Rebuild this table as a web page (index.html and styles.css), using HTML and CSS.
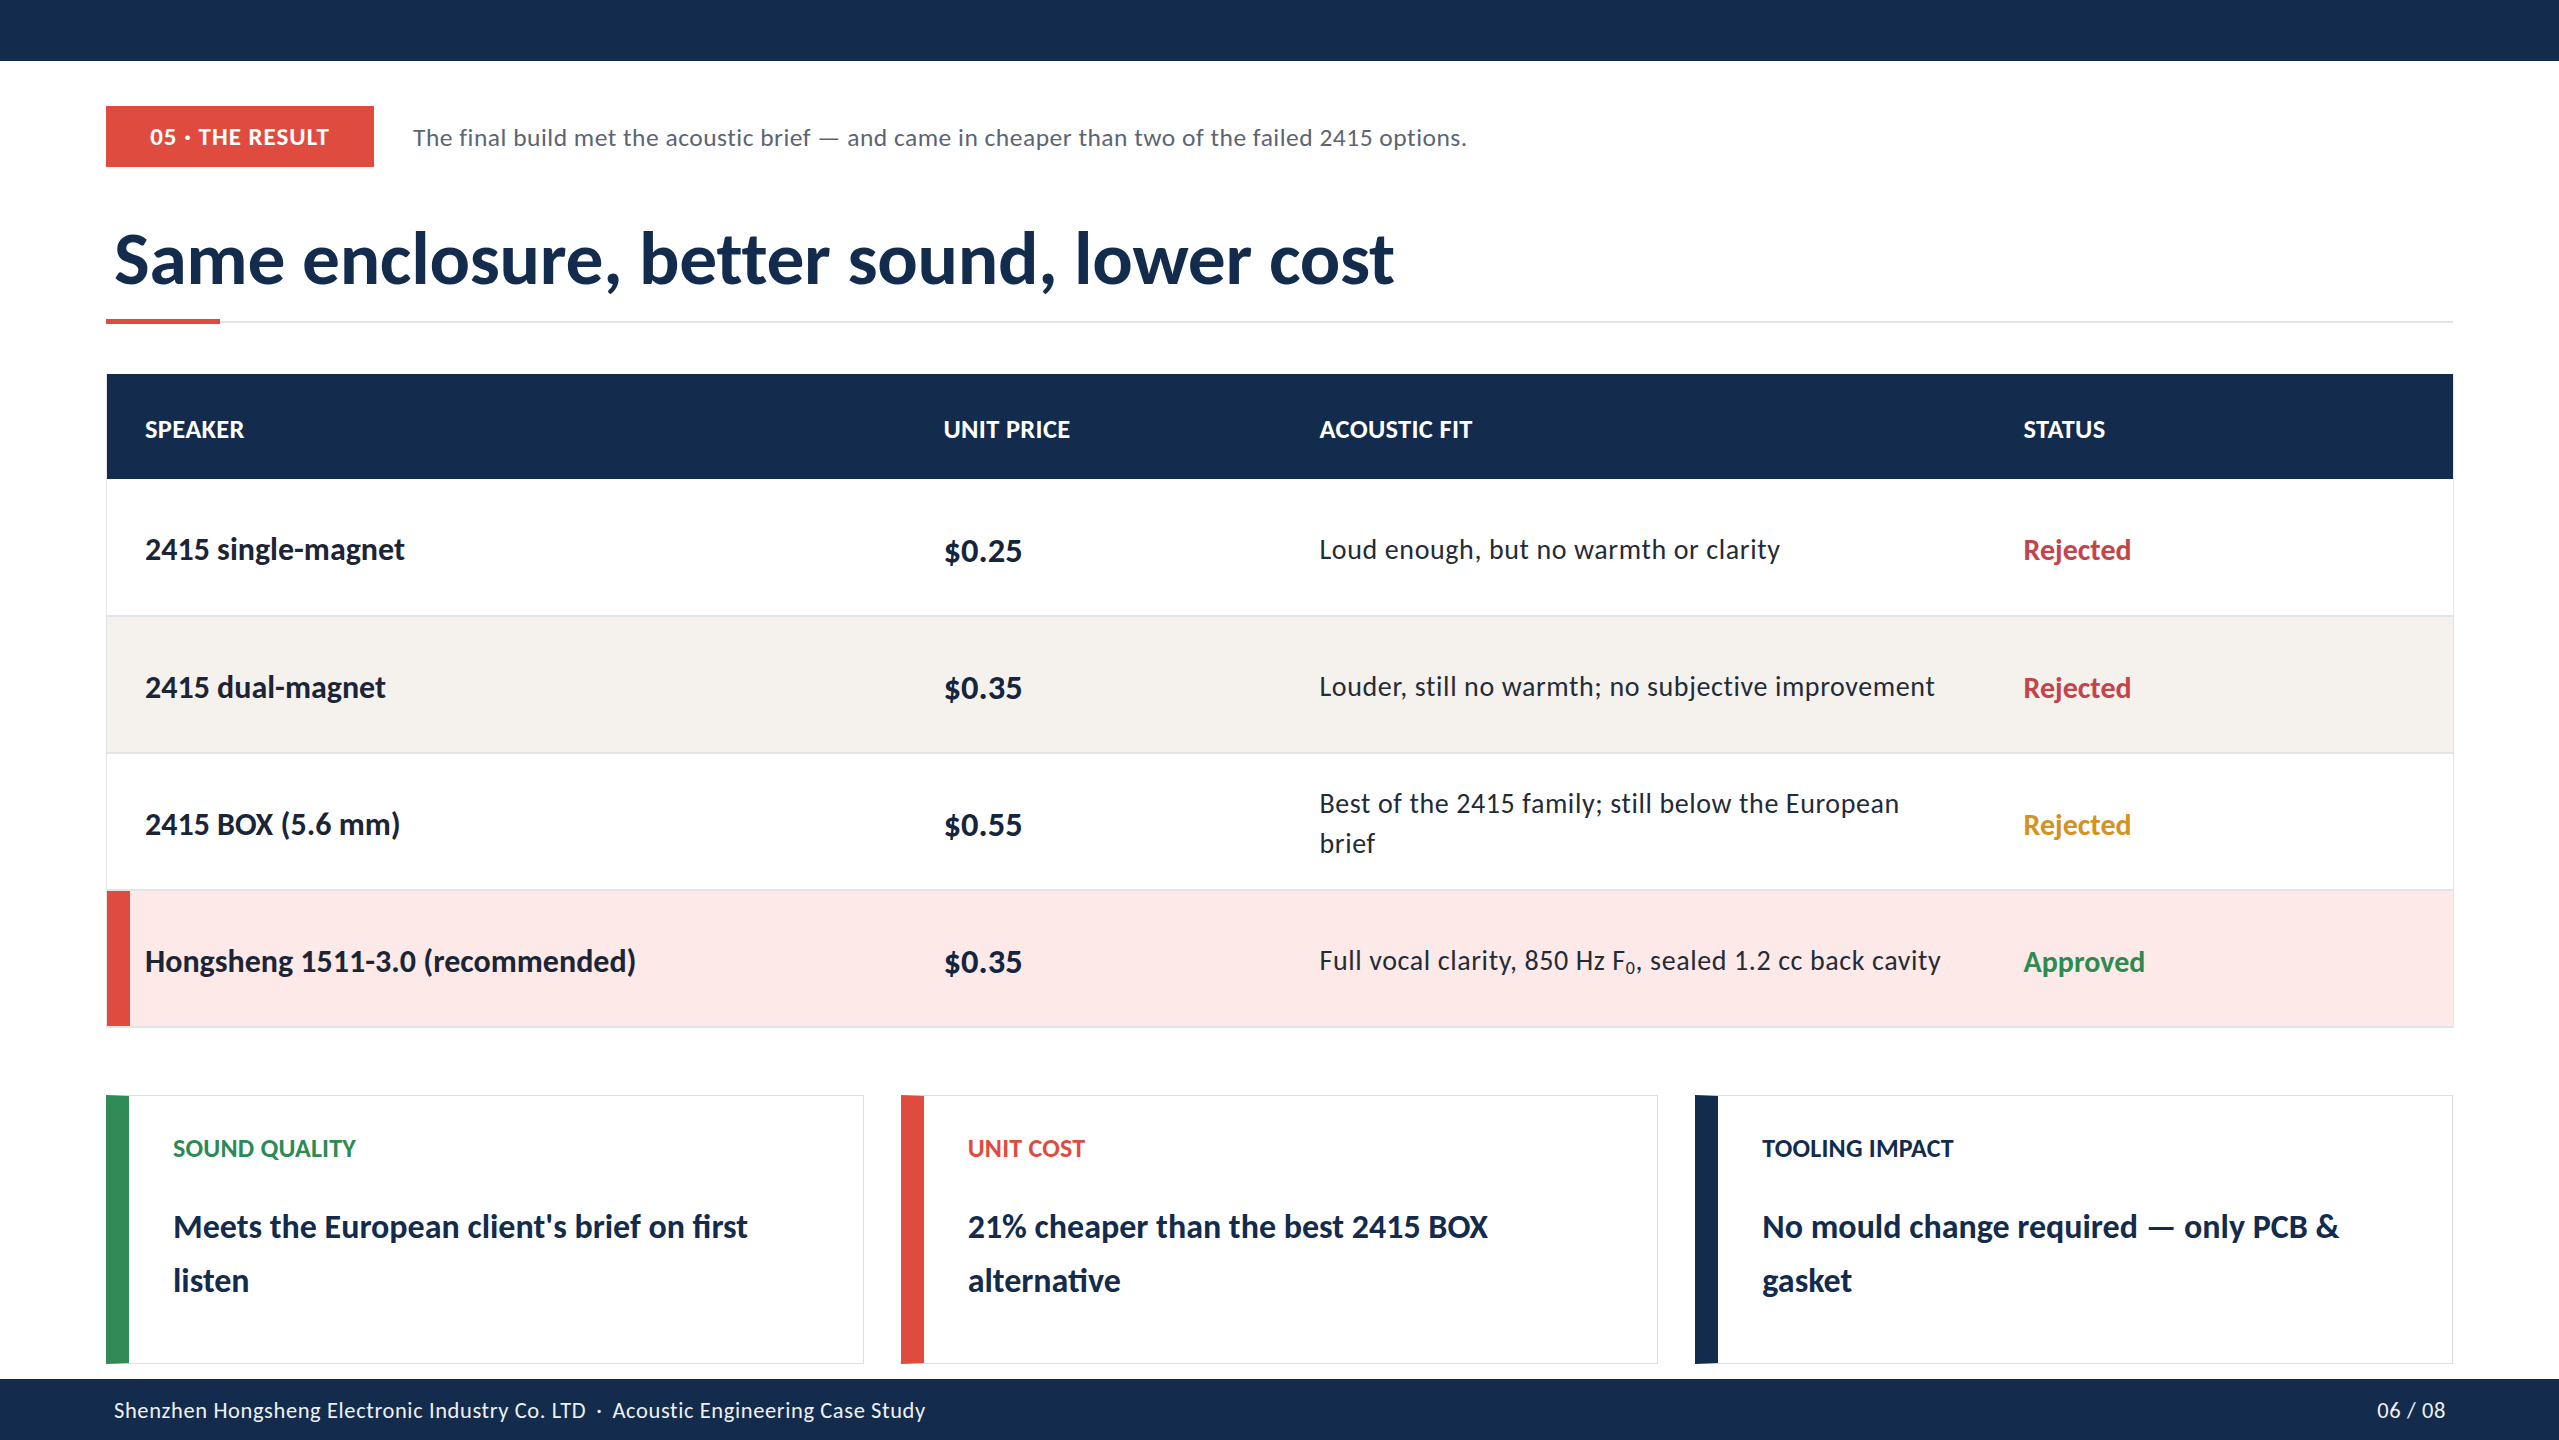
FILE: index.html
```html
<!DOCTYPE html>
<html lang="en">
<head>
<meta charset="utf-8">
<title>The Result</title>
<link rel="stylesheet" href="styles.css">
</head>
<body>
<div class="page">
  <header class="topbar"></header>
  <main class="content">
    <div class="kicker">
      <span class="tag">05 · THE RESULT</span>
      <span class="lede">The final build met the acoustic brief — and came in cheaper than two of the failed 2415 options.</span>
    </div>
    <h1 class="title">Same enclosure, better sound, lower cost</h1>
    <div class="rule"></div>

    <table class="grid">
      <colgroup>
        <col class="c1"><col class="c2"><col class="c3"><col class="c4">
      </colgroup>
      <thead>
        <tr>
          <th>SPEAKER</th>
          <th>UNIT PRICE</th>
          <th>ACOUSTIC FIT</th>
          <th>STATUS</th>
        </tr>
      </thead>
      <tbody>
        <tr>
          <td class="name">2415 single-magnet</td>
          <td class="price">$0.25</td>
          <td class="fit">Loud enough, but no warmth or clarity</td>
          <td class="status rejected">Rejected</td>
        </tr>
        <tr class="alt">
          <td class="name">2415 dual-magnet</td>
          <td class="price">$0.35</td>
          <td class="fit">Louder, still no warmth; no subjective improvement</td>
          <td class="status rejected">Rejected</td>
        </tr>
        <tr>
          <td class="name">2415 BOX (5.6 mm)</td>
          <td class="price">$0.55</td>
          <td class="fit">Best of the 2415 family; still below the European brief</td>
          <td class="status warn">Rejected</td>
        </tr>
        <tr class="pick">
          <td class="name">Hongsheng 1511-3.0 (recommended)</td>
          <td class="price">$0.35</td>
          <td class="fit nowrap">Full vocal clarity, 850 Hz F<sub>0</sub>, sealed 1.2 cc back cavity</td>
          <td class="status approved">Approved</td>
        </tr>
      </tbody>
    </table>

    <section class="cards">
      <div class="card card-green">
        <div class="card-label">SOUND QUALITY</div>
        <div class="card-text">Meets the European client's brief on first listen</div>
      </div>
      <div class="card card-red">
        <div class="card-label">UNIT COST</div>
        <div class="card-text">21% cheaper than the best 2415 BOX alternative</div>
      </div>
      <div class="card card-navy">
        <div class="card-label">TOOLING IMPACT</div>
        <div class="card-text">No mould change required — only PCB &amp; gasket</div>
      </div>
    </section>
  </main>
  <footer class="footer">
    <span class="foot-left">Shenzhen Hongsheng Electronic Industry Co. LTD<span class="sep">·</span>Acoustic Engineering Case Study</span>
    <span class="foot-right">06 / 08</span>
  </footer>
</div>
</body>
</html>
```

FILE: styles.css
```css
* { box-sizing: border-box; }

html, body {
  margin: 0;
  padding: 0;
  background: #ffffff;
}

body {
  font-family: Carlito, Calibri, Lato, "Noto Sans", sans-serif;
  color: #132b4c;
}

.page {
  width: 2559px;
  height: 1440px;
  display: flex;
  flex-direction: column;
  overflow: hidden;
}

.topbar {
  height: 61px;
  background: #132b4c;
  flex: none;
}

.content {
  flex: 1;
  padding: 45px 106px 0 106px;
  display: flex;
  flex-direction: column;
}

.kicker {
  display: flex;
  align-items: center;
  gap: 39px;
  height: 61px;
}

.tag {
  display: flex;
  align-items: center;
  justify-content: center;
  width: 268px;
  height: 61px;
  background: #e04b3f;
  color: #ffffff;
  font-weight: 700;
  font-size: 25px;
  letter-spacing: 1px;
}

.lede {
  font-size: 25.5px;
  letter-spacing: 0.5px;
  color: #5b6573;
  padding-top: 2px;
}

.title {
  margin: 46px 0 0 0;
  padding-left: 8px;
  font-size: 75.5px;
  line-height: 1.2;
  font-weight: 700;
  color: #132b4c;
  letter-spacing: -0.3px;
}

.rule {
  margin-top: 15px;
  height: 5px;
  background:
    linear-gradient(#e04b3f, #e04b3f) 0 0 / 114px 5px no-repeat,
    linear-gradient(#e4e4e4, #e4e4e4) 0 2px / 100% 2px no-repeat;
}

.grid {
  margin-top: 50px;
  width: 2347px;
  border-collapse: collapse;
  table-layout: fixed;
  border-left: 1px solid #e2e4e8;
  border-right: 1px solid #e2e4e8;
}

.c1 { width: 799px; }
.c2 { width: 376px; }
.c3 { width: 704px; }
.c4 { width: 468px; }

.grid thead tr {
  height: 105px;
  background: #132b4c;
}

.grid th {
  text-align: left;
  padding: 6px 38px 0 38px;
  color: #ffffff;
  font-weight: 700;
  font-size: 26.5px;
  letter-spacing: 0.3px;
}

.grid tbody tr {
  height: 137px;
  border-bottom: 2px solid #e2e4e8;
  background: #ffffff;
}

.grid tbody tr.alt { background: #f5f2ee; }
.grid tbody tr.pick { background: #fdeae8; }
.grid tbody tr.pick .name { box-shadow: inset 23px 0 0 #e04b3f; }

.grid td {
  padding: 6px 38px 0 38px;
  vertical-align: middle;
}

.name {
  font-weight: 700;
  font-size: 32px;
  color: #1b2536;
}

.price {
  font-weight: 700;
  font-size: 34.5px;
  color: #15253e;
}

.fit {
  font-size: 28px;
  letter-spacing: 0.6px;
  line-height: 40px;
  color: #232b37;
}

.nowrap { white-space: nowrap; }

.fit sub {
  font-size: 18px;
  line-height: 0;
  vertical-align: -4px;
}

.status {
  font-weight: 700;
  font-size: 30px;
}

.rejected { color: #c3444b; }
.warn { color: #d4921e; }
.approved { color: #2f8a4f; }

.cards {
  margin-top: 67px;
  display: grid;
  grid-template-columns: 1fr 1fr 1fr;
  gap: 37px;
}

.card {
  height: 269px;
  border: 1px solid #dedede;
  border-left: 23px solid #2f8a55;
  padding: 37px 62px 0 44px;
  background: #ffffff;
}

.card-green { border-left-color: #2f8a55; }
.card-red { border-left-color: #e04b3f; }
.card-navy { border-left-color: #132b4c; }

.card-label {
  font-size: 26px;
  line-height: 1.2;
  font-weight: 700;
  letter-spacing: 0.2px;
}

.card-green .card-label { color: #2e8a55; }
.card-red .card-label { color: #e04b3f; }
.card-navy .card-label { color: #132b4c; }

.card-text {
  margin-top: 36px;
  font-size: 34px;
  line-height: 54px;
  font-weight: 700;
  color: #132b4c;
}

.footer {
  margin-top: auto;
  height: 61px;
  flex: none;
  background: #132b4c;
  color: #eef1f5;
  display: flex;
  align-items: center;
  justify-content: space-between;
  padding: 2px 113px 0 114px;
  font-size: 22.5px;
  letter-spacing: 0.6px;
}

.sep {
  margin: 0 10px;
}
```
